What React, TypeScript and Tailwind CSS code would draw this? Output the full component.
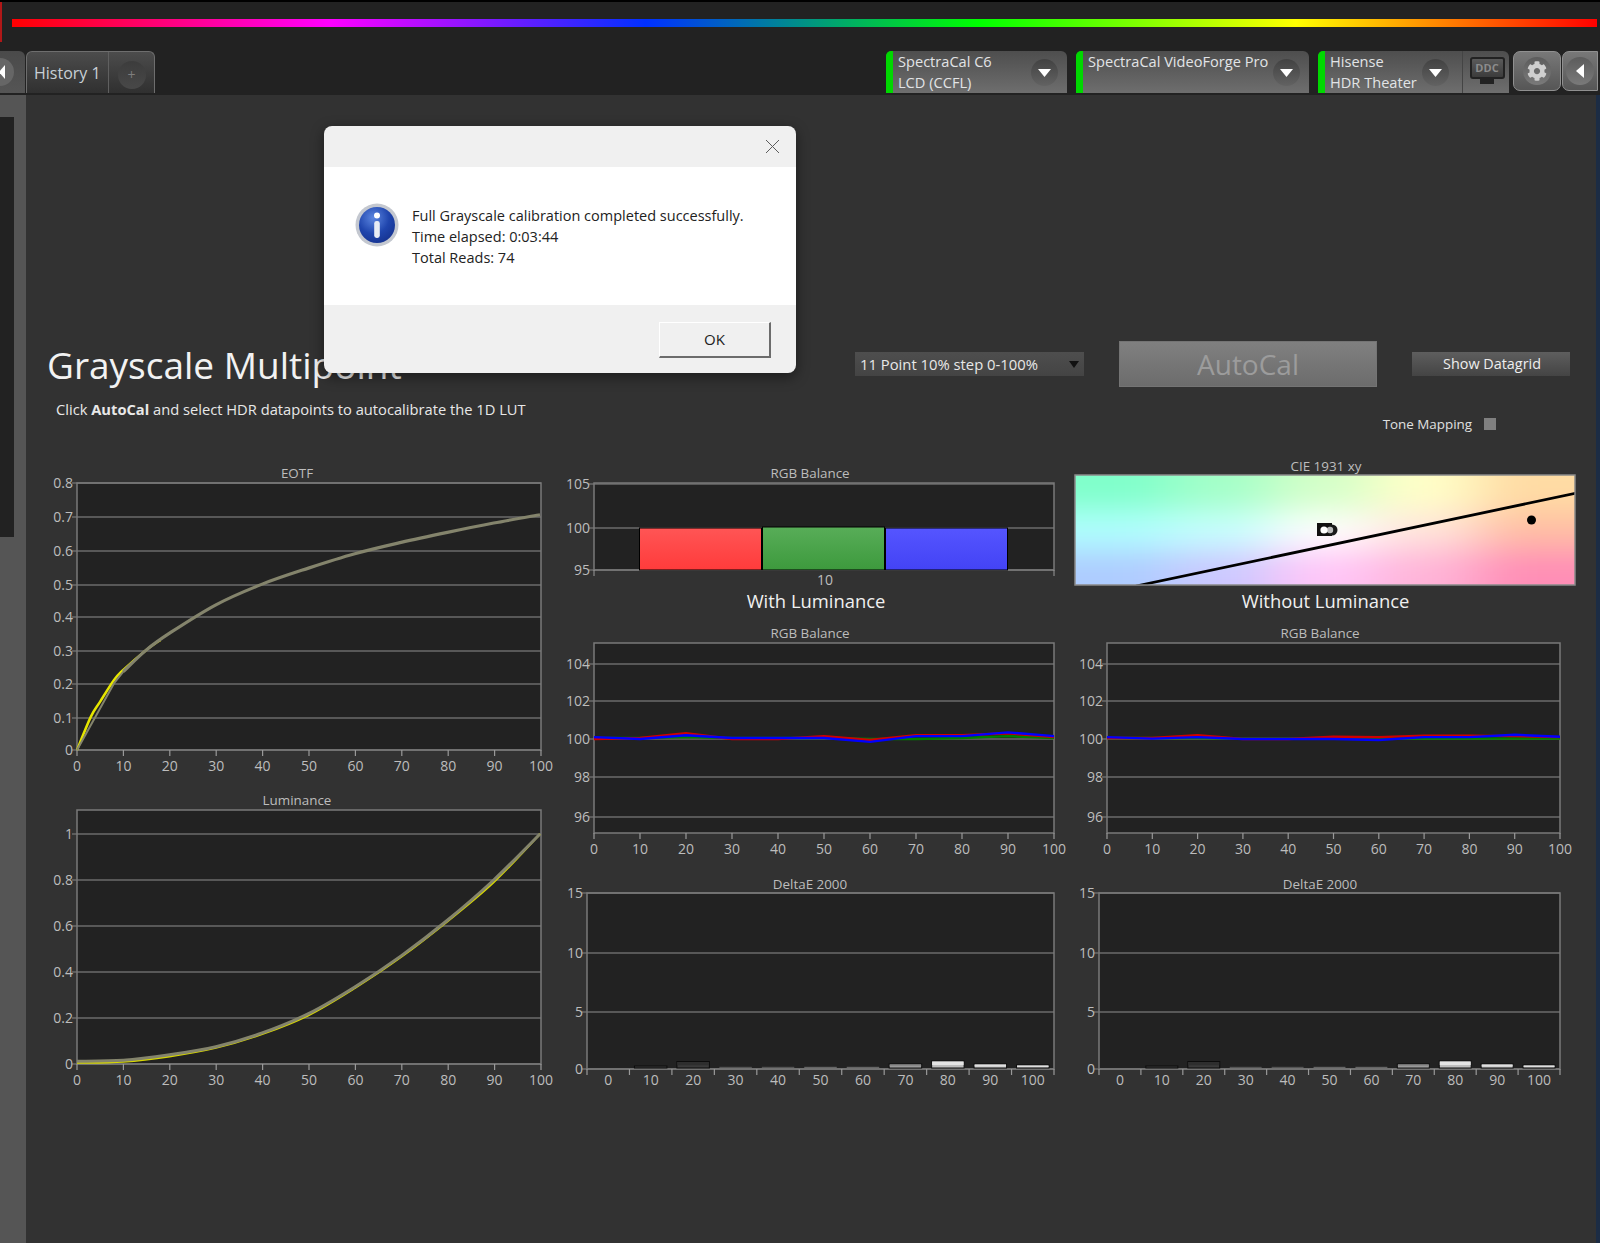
import { FaCog } from "react-icons/fa";

const GRID = "#6b6b6b";
const FRAME = "#7a7a7a";
const LABEL = "#bdbdbd";
const STEPS = [0, 10, 20, 30, 40, 50, 60, 70, 80, 90, 100];

type Box = { left: number; right: number; top: number; bottom: number };
type Tick = [string, number];

// Everything inside a chart svg is in page pixels, the viewBox picks the window.
function Frame({ box, yTicks, title, titleX, titleY }: { box: Box; yTicks: Tick[]; title: string; titleX: number; titleY: number }) {
  return (
    <>
      <text x={titleX} y={titleY + 4.5} textAnchor="middle" fill={LABEL} fontSize={13.4}>
        {title}
      </text>
      <rect x={box.left} y={box.top} width={box.right - box.left} height={box.bottom - box.top} fill="#222" />
      {yTicks.map(([label, y]) => (
        <g key={label}>
          <line x1={box.left - 5} x2={box.right} y1={y} y2={y} stroke={GRID} strokeWidth={1.5} />
          <text x={box.left - 4} y={y + 5} textAnchor="end" fill={LABEL} fontSize={14}>
            {label}
          </text>
        </g>
      ))}
      <rect x={box.left} y={box.top} width={box.right - box.left} height={box.bottom - box.top} fill="none" stroke={FRAME} strokeWidth={1.5} />
    </>
  );
}

function XAxis({ box, labelY }: { box: Box; labelY: number }) {
  const w = box.right - box.left;
  return (
    <>
      {STEPS.map((s) => {
        const x = box.left + (w * s) / 100;
        return (
          <g key={s}>
            <line x1={x} x2={x} y1={box.bottom} y2={box.bottom + 6} stroke="#999" strokeWidth={1.2} />
            <text x={x} y={labelY + 5} textAnchor="middle" fill={LABEL} fontSize={14}>
              {s}
            </text>
          </g>
        );
      })}
    </>
  );
}

function toPath(box: Box, values: number[], yOf: (v: number) => number) {
  return values
    .map((v, i) => `${i ? "L" : "M"}${box.left + ((box.right - box.left) * i) / 10} ${yOf(v)}`)
    .join(" ");
}

// Catmull-Rom through the samples, the measured curves have no visible kinks
function smooth(pts: number[][]) {
  let d = `M${pts[0][0]} ${pts[0][1]}`;
  for (let i = 0; i < pts.length - 1; i++) {
    const p0 = pts[Math.max(0, i - 1)];
    const p1 = pts[i];
    const p2 = pts[i + 1];
    const p3 = pts[Math.min(pts.length - 1, i + 2)];
    const c1 = [p1[0] + (p2[0] - p0[0]) / 6, p1[1] + (p2[1] - p0[1]) / 6];
    const c2 = [p2[0] - (p3[0] - p1[0]) / 6, p2[1] - (p3[1] - p1[1]) / 6];
    d += ` C${c1[0]} ${c1[1]} ${c2[0]} ${c2[1]} ${p2[0]} ${p2[1]}`;
  }
  return d;
}

function EotfChart() {
  const box = { left: 77, right: 541, top: 483, bottom: 750 };
  const map = (pts: number[][]) => pts.map(([x, y]) => [77 + x * 4.63, 750 - y * 333.75]);
  const ref = [[10, 0.235], [15, 0.3], [20, 0.35], [30, 0.435], [40, 0.497], [50, 0.545], [60, 0.588], [70, 0.622], [80, 0.652], [90, 0.68], [100, 0.705]];
  const measured = [[0, 0], [3, 0.1], [5, 0.145], [8, 0.21], [10, 0.24], [15, 0.3], [18, 0.33]];
  return (
    <svg width={514} height={334} viewBox="47 456 514 334" className="block">
      <Frame
        box={box}
        title="EOTF"
        titleX={297}
        titleY={473}
        yTicks={[["0.8", 483], ["0.7", 517], ["0.6", 551], ["0.5", 585], ["0.4", 617], ["0.3", 651], ["0.2", 684], ["0.1", 718], ["0", 750]]}
      />
      <XAxis box={box} labelY={766} />
      <path d={smooth(map(measured))} fill="none" stroke="#e6e600" strokeWidth={2.5} />
      <path d={`M77 750 L${77 + 8 * 4.63} ${750 - 0.2 * 333.75} L${77 + 10 * 4.63} ${750 - 0.235 * 333.75}`} fill="none" stroke="#84846c" strokeWidth={2} />
      <path d={smooth(map(ref))} fill="none" stroke="#84846c" strokeWidth={3.2} />
    </svg>
  );
}

function LuminanceChart() {
  const box = { left: 77, right: 541, top: 810, bottom: 1064 };
  const map = (vals: number[]) => vals.map((v, i) => [77 + i * 46.3, 1064 - v * 230]);
  const ref = [0.012, 0.016, 0.04, 0.075, 0.135, 0.219, 0.335, 0.47, 0.625, 0.8, 1.0];
  const measured = [0.005, 0.01, 0.033, 0.07, 0.13, 0.212, 0.33, 0.465, 0.62, 0.79, 1.0];
  return (
    <svg width={514} height={305} viewBox="47 790 514 305" className="block">
      <Frame
        box={box}
        title="Luminance"
        titleX={297}
        titleY={800}
        yTicks={[["1", 834], ["0.8", 880], ["0.6", 926], ["0.4", 972], ["0.2", 1018], ["0", 1064]]}
      />
      <XAxis box={box} labelY={1080} />
      <path d={smooth(map(measured))} fill="none" stroke="#d8d800" strokeWidth={2} />
      <path d={smooth(map(ref))} fill="none" stroke="#84846c" strokeWidth={3} />
    </svg>
  );
}

function BalanceBars() {
  const box = { left: 593, right: 1053, top: 483, bottom: 570 };
  return (
    <svg width={505} height={134} viewBox="560 456 505 134" className="block">
      <defs>
        <linearGradient id="bar-red" x1="0" y1="0" x2="0" y2="1">
          <stop offset="0" stopColor="#ff5555" />
          <stop offset="1" stopColor="#ff3b3b" />
        </linearGradient>
        <linearGradient id="bar-green" x1="0" y1="0" x2="0" y2="1">
          <stop offset="0" stopColor="#58ad58" />
          <stop offset="1" stopColor="#3d9a3d" />
        </linearGradient>
        <linearGradient id="bar-blue" x1="0" y1="0" x2="0" y2="1">
          <stop offset="0" stopColor="#5555ff" />
          <stop offset="1" stopColor="#4343f5" />
        </linearGradient>
      </defs>
      <Frame box={box} title="RGB Balance" titleX={809} titleY={473} yTicks={[["105", 484], ["100", 528], ["95", 570]]} />
      <rect x={638.5} y={528} width={122} height={42} fill="url(#bar-red)" stroke="#000" />
      <rect x={761.5} y={527} width={122} height={43} fill="url(#bar-green)" stroke="#000" />
      <rect x={884.5} y={528} width={122} height={42} fill="url(#bar-blue)" stroke="#000" />
      <line x1={593} x2={593} y1={570} y2={576} stroke="#999" />
      <line x1={1053} x2={1053} y1={570} y2={576} stroke="#999" />
      <text x={824} y={585} textAnchor="middle" fill={LABEL} fontSize={14}>
        10
      </text>
    </svg>
  );
}

function CieChart() {
  const rows = [
    ["#80ffca", "#a4ffc8", "#d4ffc8", "#ffffc8", "#ffdca4"],
    ["#b0ffff", "#c8ffff", "#ffffff", "#ffe4dc", "#ffbea4"],
    ["#aeccff", "#ccc8ff", "#ffc6f8", "#ffb4d8", "#ff8eb6"],
  ];
  const cw = 100;
  const ch = 37;
  return (
    <svg width={531} height={134} viewBox="1065 456 531 134" className="block">
      <defs>
        <clipPath id="cie-clip">
          <rect x={1074} y={475} width={500} height={110} />
        </clipPath>
        <filter id="cie-blur" filterUnits="userSpaceOnUse" x={900} y={350} width={850} height={360}>
          <feGaussianBlur stdDeviation="30 15" />
        </filter>
      </defs>
      <text x={1325} y={470.5} textAnchor="middle" fill={LABEL} fontSize={13.4}>
        CIE 1931 xy
      </text>
      <g clipPath="url(#cie-clip)">
        <g filter="url(#cie-blur)">
          {rows.map((row, r) =>
            row.map((color, c) => {
              // outer cells grow past the plot so the blur keeps their colour at the edge
              const x = c === 0 ? 900 : 1074 + c * cw;
              const w = c === 0 || c === 4 ? 275 : cw;
              const y = r === 0 ? 350 : 475 + r * ch;
              const h = r === 0 || r === 2 ? 162 : ch;
              return <rect key={`${r}-${c}`} x={x} y={y} width={w} height={h} fill={color} />;
            }),
          )}
        </g>
        <line x1={1135} y1={586} x2={1576} y2={493} stroke="#000" strokeWidth={2.8} />
        <circle cx={1530.5} cy={520} r={4.5} fill="#000" />
        <rect x={1316} y={523} width={15} height={13} fill="#111" />
        <circle cx={1331} cy={530} r={5.5} fill="#1a1a1a" />
        <circle cx={1329} cy={530} r={3.2} fill="#bcbcbc" />
        <circle cx={1323} cy={530} r={3.6} fill="#fff" />
      </g>
      <rect x={1074} y={475} width={500} height={110} fill="none" stroke="#8a8a8a" strokeWidth={1.5} />
    </svg>
  );
}

function BalanceLines({ left, right, titleX, viewBox, blue, red, green }: { left: number; right: number; titleX: number; viewBox: string; blue: number[]; red: number[]; green: number[] }) {
  const box = { left, right, top: 643, bottom: 833 };
  const yOf = (v: number) => 739 - (v - 100) * 19;
  const [, , w, h] = viewBox.split(" ").map(Number);
  return (
    <svg width={w} height={h} viewBox={viewBox} className="block">
      <Frame
        box={box}
        title="RGB Balance"
        titleX={titleX}
        titleY={633}
        yTicks={[["104", 664], ["102", 701], ["100", 739], ["98", 777], ["96", 817]]}
      />
      <XAxis box={box} labelY={849} />
      <path d={toPath(box, green, yOf)} fill="none" stroke="#008000" strokeWidth={2.4} />
      <path d={toPath(box, red, yOf)} fill="none" stroke="#d00000" strokeWidth={2.4} />
      <path d={toPath(box, blue, yOf)} fill="none" stroke="#0000ff" strokeWidth={2.4} />
    </svg>
  );
}

const DELTA_BARS: [number, string, string][] = [
  [0, "#222", "#222"],
  [2, "#2a2a2a", "#2a2a2a"],
  [6.5, "#2e2e2e", "#3a3a3a"],
  [1.2, "#555", "#555"],
  [1.2, "#555", "#555"],
  [1.2, "#666", "#666"],
  [1.2, "#666", "#666"],
  [4, "#8a8a8a", "#aaaaaa"],
  [7, "#e4e4e4", "#bdbdbd"],
  [4, "#e0e0e0", "#c8c8c8"],
  [3, "#e0e0e0", "#c8c8c8"],
];

function DeltaChart({ left, right, titleX, viewBox }: { left: number; right: number; titleX: number; viewBox: string }) {
  const box = { left, right, top: 893, bottom: 1069 };
  const step = (right - left) / 11;
  const [, , w, h] = viewBox.split(" ").map(Number);
  return (
    <svg width={w} height={h} viewBox={viewBox} className="block">
      <Frame box={box} title="DeltaE 2000" titleX={titleX} titleY={884} yTicks={[["15", 893], ["10", 953], ["5", 1012], ["0", 1069]]} />
      {DELTA_BARS.map(([height, top, bottom], i) => {
        const x = left + step * i;
        return (
          <g key={i}>
            {height > 0 && (
              <>
                <rect x={x + 5} y={1068 - height} width={step - 10} height={height} fill={bottom} stroke={height > 1.5 ? "#0c0c0c" : "none"} />
                <rect x={x + 5.5} y={1068.5 - height} width={step - 11} height={height / 2} fill={top} />
              </>
            )}
            <line x1={x} x2={x} y1={1069} y2={1075} stroke="#999" strokeWidth={1.2} />
            <text x={x + step / 2} y={1085} textAnchor="middle" fill={LABEL} fontSize={14}>
              {STEPS[i]}
            </text>
          </g>
        );
      })}
      <line x1={right} x2={right} y1={1069} y2={1075} stroke="#999" strokeWidth={1.2} />
    </svg>
  );
}

function DropCircle() {
  return (
    <div className="flex h-[27px] w-[27px] shrink-0 items-center justify-center rounded-full bg-linear-to-b from-[#424242] to-[#626262]">
      <svg width={13} height={8} viewBox="0 0 13 8">
        <path d="M0 0h13L6.5 8z" fill="#fff" />
      </svg>
    </div>
  );
}

function DevicePill({ width, lines, gap }: { width: number; lines: string[]; gap: number }) {
  return (
    <div style={{ width }} className="flex h-[42px] shrink-0 rounded-t-[6px] bg-linear-to-b from-[#4e4e4e] to-[#6e6e6e]">
      <div className="w-[7px] shrink-0 rounded-tl-[5px] bg-[#00d800]" />
      <div className="flex-1 pl-[5px] text-[14.6px] leading-[21px] whitespace-nowrap text-[#e2e4e6]">
        {lines.map((l) => (
          <div key={l}>{l}</div>
        ))}
      </div>
      <div style={{ marginRight: gap }} className="mt-[8px]">
        <DropCircle />
      </div>
    </div>
  );
}

function RoundButton({ className, children }: { className: string; children: React.ReactNode }) {
  return (
    <div className={`flex h-[40px] shrink-0 items-center justify-center border border-[#909090] bg-linear-to-b from-[#787878] to-[#565656] ${className}`}>
      <div className="flex h-[28px] w-[28px] items-center justify-center rounded-full bg-linear-to-b from-[#5c5c5c] to-[#7a7a7a]">{children}</div>
    </div>
  );
}

export default function App() {
  return (
    <div className="relative flex h-[1243px] w-[1600px] flex-col overflow-hidden bg-[#323232] [font-family:'Open_Sans',sans-serif]">
      <header className="relative h-[95px] shrink-0 border-t-2 border-black bg-[#222]">
        <div className="absolute left-0 top-0 h-[40px] w-[2px] bg-[#b01818]" />
        <div className="ml-[12px] mt-[17px] h-[8px] w-[1585px] bg-[linear-gradient(90deg,#ff0000_0%,#ff00ff_20%,#0030ff_40%,#00ff00_61%,#ffff00_81%,#ff0000_100%)]" />
        <div className="mt-[24px] flex h-[42px]">
          <div className="flex h-[42px] w-[25px] shrink-0 items-center overflow-hidden rounded-tr-[6px] bg-linear-to-b from-[#4a4a4a] to-[#555]">
            <div className="-ml-[14px] flex h-[28px] w-[28px] shrink-0 items-center justify-end rounded-full bg-[#666] pr-[9px]">
              <svg width={6} height={14} viewBox="0 0 6 14">
                <path d="M6 0v14L0 7z" fill="#fff" />
              </svg>
            </div>
          </div>
          <div className="ml-[1px] flex w-[129px] shrink-0 rounded-t-[6px] border-x border-t border-[#6e6e6e] bg-linear-to-b from-[#4c4c4c] to-[#303030]">
            <div className="flex w-[81px] items-center pl-[7px] text-[16px] whitespace-nowrap text-[#c8d0d6]">History 1</div>
            <div className="flex flex-1 items-center justify-center border-l border-[#606060]">
              <div className="mt-[4px] flex h-[28px] w-[28px] items-center justify-center rounded-full bg-linear-to-b from-[#3c3c3c] to-[#484848] text-[14px] text-[#7e7e7e]">+</div>
            </div>
          </div>
          <div className="ml-[731px] flex gap-[9px]">
            <DevicePill width={181} lines={["SpectraCal C6", "LCD (CCFL)"]} gap={9} />
            <DevicePill width={233} lines={["SpectraCal VideoForge Pro"]} gap={9} />
            <div className="flex h-[42px] w-[191px] shrink-0 rounded-t-[6px] bg-linear-to-b from-[#4e4e4e] to-[#6e6e6e]">
              <div className="w-[7px] shrink-0 rounded-tl-[5px] bg-[#00d800]" />
              <div className="w-[97px] pl-[5px] text-[14.6px] leading-[21px] whitespace-nowrap text-[#e2e4e6]">
                <div>Hisense</div>
                <div>HDR Theater</div>
              </div>
              <div className="mt-[8px]">
                <DropCircle />
              </div>
              <div className="ml-[13px] flex flex-1 flex-col items-center border-l border-[#444] pl-[2px] pt-[6px]">
                <div className="flex h-[22px] w-[35px] items-center justify-center rounded-[3px] border-2 border-[#222] bg-linear-to-b from-[#5a5a5a] to-[#3c3c3c] text-[11px] font-bold text-[#8c8c8c]">DDC</div>
                <div className="h-[5px] w-[14px] bg-[#222]" />
              </div>
            </div>
            <RoundButton className="-ml-[5px] w-[48px] rounded-[7px]">
              <FaCog className="h-[20px] w-[20px] text-[#cfcfcf]" />
            </RoundButton>
            <RoundButton className="-ml-[8px] w-[36px] rounded-l-[7px]">
              <svg width={8} height={14} viewBox="0 0 8 14">
                <path d="M8 0v14L0 7z" fill="#fff" />
              </svg>
            </RoundButton>
          </div>
        </div>
      </header>

      <div className="flex min-h-0 flex-1">
        <aside className="w-[26px] shrink-0 bg-[#555] pt-[22px]">
          <div className="h-[420px] w-[14px] bg-[#222]" />
        </aside>

        <main className="min-w-0 flex-1 pl-[21px] pt-[246px]">
          <div className="flex h-[46px] items-center gap-[35px]">
            <h1 className="w-[773px] pt-[2px] text-[37px] font-normal whitespace-nowrap text-[#f2f2f2]">Grayscale Multipoint</h1>
            <div className="flex h-[24px] w-[229px] items-center justify-between bg-linear-to-b from-[#4e4e4e] to-[#444] pl-[5px] pr-[5px] text-[14.8px] whitespace-nowrap text-[#e8e8e8]">
              <span>11 Point 10% step 0-100%</span>
              <svg width={10} height={7} viewBox="0 0 10 7">
                <path d="M0 0h10L5 7z" fill="#111" />
              </svg>
            </div>
            <div className="flex h-[46px] w-[258px] items-center justify-center border border-[#747474] bg-linear-to-b from-[#808080] to-[#6c6c6c] text-[28px] text-[#9c9c9c]">AutoCal</div>
            <div className="flex h-[24px] w-[158px] items-center justify-center bg-linear-to-b from-[#5e5e5e] to-[#444] pl-[2px] text-[14.4px] whitespace-nowrap text-[#eee]">Show Datagrid</div>
          </div>

          <div className="flex h-[69px] justify-between pr-[100px]">
            <p className="pl-[9px] pt-[11px] text-[14.7px] leading-[22px] text-[#e8e8e8]">
              Click <b>AutoCal</b> and select HDR datapoints to autocalibrate the 1D LUT
            </p>
            <div className="mt-[29px] flex h-[16px] items-center gap-[12px] text-[13.4px] text-[#e0e0e0]">
              <span>Tone Mapping</span>
              <span className="h-[12px] w-[12px] bg-[#808080]" />
            </div>
          </div>

          <div className="flex">
            <div>
              <EotfChart />
              <LuminanceChart />
            </div>
            <div>
              <BalanceBars />
              <div className="flex h-[22px] w-[505px] items-center justify-center pl-[5px] text-[18.4px] text-[#f0f0f0]">With Luminance</div>
              <BalanceLines
                left={593}
                right={1053}
                titleX={809}
                viewBox="560 612 505 253"
                blue={[100.1, 100, 100.2, 100.05, 100.05, 100.05, 99.85, 100.15, 100.15, 100.35, 100.15]}
                red={[100, 100.05, 100.3, 100, 100, 100.15, 99.95, 100.2, 100.2, 100.3, 100.1]}
                green={[100.05, 100.05, 100.1, 100.05, 100.05, 100.05, 100, 100, 100.05, 100.15, 100.05]}
              />
              <DeltaChart left={586} right={1053} titleX={809} viewBox="560 865 505 230" />
            </div>
            <div>
              <CieChart />
              <div className="flex h-[22px] w-[531px] items-center justify-center pr-[12px] text-[18.4px] text-[#f0f0f0]">Without Luminance</div>
              <BalanceLines
                left={1106}
                right={1559}
                titleX={1319}
                viewBox="1065 612 531 253"
                blue={[100.1, 100.02, 100.1, 100, 100, 100, 99.95, 100.1, 100.1, 100.22, 100.12]}
                red={[100.05, 100.05, 100.2, 100, 100, 100.12, 100.1, 100.18, 100.18, 100.15, 100.1]}
                green={[100.05, 100.05, 100.05, 100.03, 100.03, 100.03, 100.03, 100.02, 100.02, 100.03, 100.02]}
              />
              <DeltaChart left={1098} right={1559} titleX={1319} viewBox="1065 865 531 230" />
            </div>
          </div>
        </main>

        <div className="w-[4px] shrink-0 bg-[#1c2c44]" />
      </div>

      <div className="absolute left-[324px] top-[126px] flex h-[247px] w-[472px] flex-col overflow-hidden rounded-[8px] bg-[#f0f0f0] text-[#222] shadow-[0_4px_14px_rgba(0,0,0,0.45)]">
        <div className="flex h-[41px] shrink-0 items-center justify-end pr-[16px]">
          <svg width={15} height={15} viewBox="0 0 15 15">
            <path d="M1 1l13 13M14 1L1 14" stroke="#5c5c5c" strokeWidth={1} fill="none" />
          </svg>
        </div>
        <div className="flex h-[138px] shrink-0 items-start bg-white pl-[31px] pt-[36px]">
          <svg width={44} height={44} viewBox="0 0 44 44" className="shrink-0">
            <defs>
              <radialGradient id="info-fill" cx="0.4" cy="0.3" r="0.8">
                <stop offset="0" stopColor="#5c86e0" />
                <stop offset="0.55" stopColor="#1f45ad" />
                <stop offset="1" stopColor="#14308c" />
              </radialGradient>
            </defs>
            <circle cx={22} cy={22} r={21.5} fill="#c4c8d0" />
            <circle cx={22} cy={22} r={18} fill="url(#info-fill)" />
            <circle cx={22} cy={12.5} r={3} fill="#fff" />
            <rect x={19.2} y={18} width={5.6} height={17} rx={2.4} fill="#e8ecf4" />
          </svg>
          <div className="ml-[13px] mt-[2px] text-[14.5px] leading-[21px]">
            <div>Full Grayscale calibration completed successfully.</div>
            <div>Time elapsed: 0:03:44</div>
            <div>Total Reads: 74</div>
          </div>
        </div>
        <div className="flex flex-1 items-start justify-end pr-[25px] pt-[17px]">
          <div className="flex h-[36px] w-[112px] items-center justify-center border border-b-2 border-r-2 border-white border-b-[#6c6c6c] border-r-[#6c6c6c] bg-[#f0f0f0] text-[15px]">OK</div>
        </div>
      </div>
    </div>
  );
}
